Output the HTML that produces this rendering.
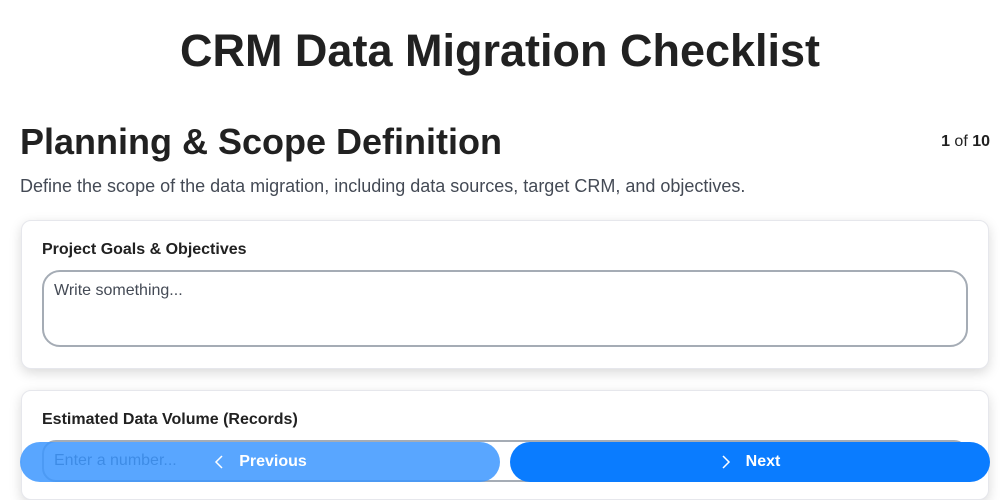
<!DOCTYPE html>
<html style="overflow:hidden;height:500px"><head><style>
body{margin:0;width:1000px;height:500px;overflow:hidden;background:#fff;font-family:"Liberation Sans",sans-serif;color:#212121;position:relative}
h1{position:absolute;top:25px;left:0;width:1000px;text-align:center;margin:0;font-size:45px;font-weight:bold;line-height:52px}
h2{position:absolute;left:20px;top:120px;margin:0;font-size:36px;line-height:44px;font-weight:bold}
.pg{position:absolute;right:10px;top:133px;font-size:16px}
.desc{position:absolute;left:20px;top:176px;font-size:18px;color:#444a55}
.card{position:absolute;left:21px;width:966px;background:#fff;border:1px solid #e6e7ec;border-radius:10px;box-shadow:0 4px 12px rgba(0,0,0,.15)}
.lbl{position:absolute;left:20px;font-size:16px;font-weight:bold}
.ta{position:absolute;left:20px;width:926px;border:2px solid #a5acb5;border-radius:18px;box-sizing:border-box;font-size:16px;color:#444a55;padding:10px 10px}
.btn{position:absolute;top:442px;height:40px;border-radius:20px;color:#fff;font-weight:bold;font-size:16px;display:flex;align-items:center;justify-content:center;gap:14px}
</style></head><body>
<h1>CRM Data Migration Checklist</h1>
<h2>Planning &amp; Scope Definition</h2>
<div class="pg"><b>1</b> of <b>10</b></div>
<div class="desc">Define the scope of the data migration, including data sources, target CRM, and objectives.</div>
<div class="card" style="top:220px;height:147px">
<div class="lbl" style="top:20px">Project Goals &amp; Objectives</div>
<div class="ta" style="top:49px;height:77px">Write something...</div>
</div>
<div class="card" style="top:390px;height:108px">
<div class="lbl" style="top:20px">Estimated Data Volume (Records)</div>
<div class="ta" style="top:49px;height:42px;border-radius:14px;color:#444a55;padding:10px">Enter a number...</div>
</div>
<div class="btn" style="left:20px;width:480px;background:rgba(60,150,255,.85)"><svg width="12" height="16" viewBox="0 0 12 16"><path d="M9 2L3 8l6 6" stroke="#fff" stroke-width="1.5" fill="none"/></svg>Previous</div>
<div class="btn" style="left:510px;width:480px;background:#0a7cff"><svg width="12" height="16" viewBox="0 0 12 16"><path d="M3 2l6 6-6 6" stroke="#fff" stroke-width="1.5" fill="none"/></svg>Next</div>
</body></html>
